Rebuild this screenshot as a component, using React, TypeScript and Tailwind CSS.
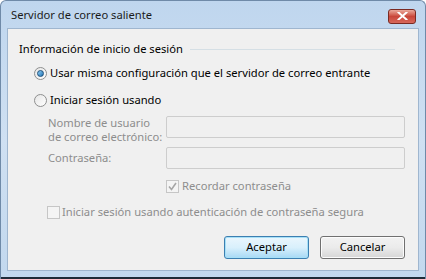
import type { ReactNode } from "react";

const font = { fontFamily: '"Noto Sans", "Open Sans", sans-serif' };

const Radio = ({ checked }: { checked?: boolean }) => (
  <span className="flex h-[13px] w-[13px] shrink-0 items-center justify-center rounded-full border border-[#8e8f8f] bg-gradient-to-br from-[#e6e6e6] to-[#ffffff]">
    {checked && (
      <span className="h-[7px] w-[7px] rounded-full border border-[#1b4f7a] bg-gradient-to-br from-[#8fd0f7] to-[#1d73b3]" />
    )}
  </span>
);

const Check = ({ checked }: { checked?: boolean }) => (
  <span className="flex h-[13px] w-[13px] shrink-0 items-center justify-center border border-[#c6c6c6] bg-[#f4f4f4]">
    {checked && (
      <svg width="9" height="9" viewBox="0 0 9 9">
        <path d="M1 4.5 L3.5 7.5 L8 1" fill="none" stroke="#a6a6a6" strokeWidth="1.6" />
      </svg>
    )}
  </span>
);

const Field = ({ label }: { label: ReactNode }) => (
  <div className="flex h-[22px] items-center">
    <div className="w-[118px] whitespace-nowrap leading-[14px] text-[#8d8d8d]">{label}</div>
    <div className="h-[22px] w-[239px] rounded-[2px] border border-[#cdcdcd] bg-[#f0f0f0]" />
  </div>
);

export default function App() {
  return (
    <div
      style={font}
      className="flex h-[279px] w-[426px] flex-col overflow-hidden rounded-t-[6px] border-x border-t border-[#6f8aa8] bg-gradient-to-b from-[#bfd6ee] via-[#cfe0f2] to-[#c2d8ee] text-[11.2px] text-black"
    >
      {/* title bar */}
      <div className="flex h-[27px] shrink-0 items-center justify-between pl-[10px] pr-[9px]">
        <span className="mt-[2px] text-[#1b1b1b]">Servidor de correo saliente</span>
        <span className="mt-[3px] flex h-[15px] w-[28px] items-center justify-center rounded-[3px] border border-[#7a2a22] bg-gradient-to-b from-[#e9a99c] via-[#c9463a] to-[#d7685b]">
          <svg width="11" height="8" viewBox="0 0 11 8">
            <path d="M1.5 0.5 L9.5 7.5 M9.5 0.5 L1.5 7.5" stroke="#fff" strokeWidth="2" strokeLinecap="square" />
          </svg>
        </span>
      </div>

      {/* client area */}
      <div className="mx-[6px] flex-1 border border-[#9fb6cf] bg-[#f0f0f0] pl-[11px] pr-[12px] pt-[12px]">
        <div className="flex h-[16px] items-center pr-[11px]">
          <span>Información de inicio de sesión</span>
          <span className="ml-[7px] h-px flex-1 bg-[#d5dfe5]" />
        </div>

        <div className="mt-[8px] flex h-[16px] items-center gap-[3px] pl-[15px]">
          <Radio checked />
          <span>Usar misma configuración que el servidor de correo entrante</span>
        </div>
        <div className="mt-[11px] flex h-[16px] items-center gap-[3px] pl-[15px]">
          <Radio />
          <span>Iniciar sesión usando</span>
        </div>

        <div className="mt-[8px] flex flex-col gap-[9px] pl-[29px]">
          <div className="flex h-[22px] items-start">
            <div className="w-[118px] whitespace-nowrap leading-[14px] text-[#8d8d8d]">
              Nombre de usuario
              <br />
              de correo electrónico:
            </div>
            <div className="h-[22px] w-[239px] rounded-[2px] border border-[#cdcdcd] bg-[#f0f0f0]" />
          </div>
          <Field label="Contraseña:" />
        </div>

        <div className="mt-[9px] flex h-[16px] items-center gap-[3px] pl-[147px] text-[#8d8d8d]">
          <Check checked />
          <span>Recordar contraseña</span>
        </div>
        <div className="mt-[10px] flex h-[16px] items-center gap-[2px] pl-[28px] text-[#8d8d8d]">
          <Check />
          <span>Iniciar sesión usando autenticación de contraseña segura</span>
        </div>

        <div className="mt-[16px] flex justify-end gap-[11px] pr-[1px]">
          <button className="h-[23px] w-[85px] rounded-[3px] border border-[#3c7fb1] bg-gradient-to-b from-[#eaf6fd] via-[#d9f0fc] to-[#a7d9f5] shadow-[inset_0_0_0_1px_#a7e0f7]">
            Aceptar
          </button>
          <button className="h-[23px] w-[85px] rounded-[3px] border border-[#707070] bg-gradient-to-b from-[#f2f2f2] via-[#ebebeb] to-[#d6d6d6] shadow-[inset_0_0_0_1px_#fcfcfc]">
            Cancelar
          </button>
        </div>
      </div>

      {/* bottom frame */}
      <div className="h-[6px] shrink-0" />
      <div className="h-[2px] shrink-0 bg-[#1e2b38]" />
    </div>
  );
}
